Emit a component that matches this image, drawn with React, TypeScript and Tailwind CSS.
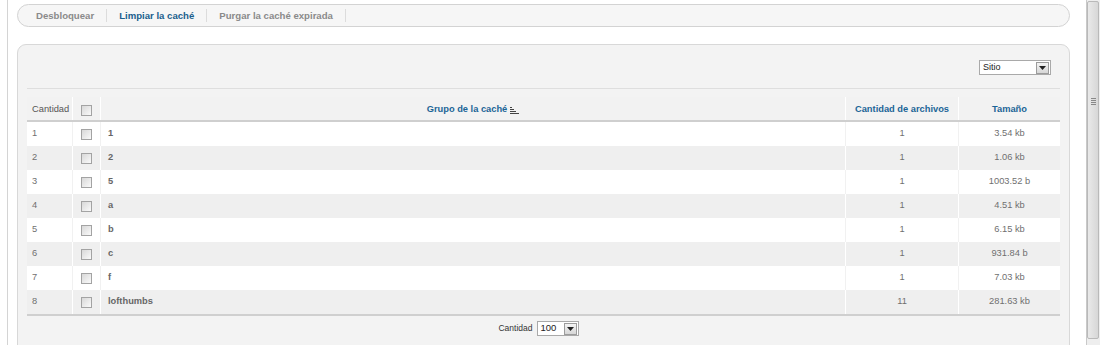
import React from "react";

type CacheRow = { id: number; group: string; files: number; size: string };

const rows: CacheRow[] = [
  { id: 1, group: "1", files: 1, size: "3.54 kb" },
  { id: 2, group: "2", files: 1, size: "1.06 kb" },
  { id: 3, group: "5", files: 1, size: "1003.52 b" },
  { id: 4, group: "a", files: 1, size: "4.51 kb" },
  { id: 5, group: "b", files: 1, size: "6.15 kb" },
  { id: 6, group: "c", files: 1, size: "931.84 b" },
  { id: 7, group: "f", files: 1, size: "7.03 kb" },
  { id: 8, group: "lofthumbs", files: 11, size: "281.63 kb" },
];

const tabs = ["Desbloquear", "Limpiar la caché", "Purgar la caché expirada"];

function Check() {
  return (
    <span className="block h-[11px] w-[11px] border border-[#a3a3a3] bg-gradient-to-br from-[#d8d8d8] to-[#fafafa]" />
  );
}

function DropArrow() {
  return (
    <span className="flex h-[12px] w-[13px] items-center justify-center border border-[#9c9c9c] bg-gradient-to-b from-[#f4f4f4] to-[#d6d6d6]">
      <svg width="7" height="4" viewBox="0 0 7 4">
        <path d="M0 0h7L3.5 4z" fill="#222" />
      </svg>
    </span>
  );
}

function SortIcon() {
  return (
    <svg width="9" height="9" viewBox="0 0 9 9" className="ml-[3px] inline-block">
      <rect x="0" y="1" width="2" height="1" fill="#444" />
      <rect x="0" y="3" width="4" height="1" fill="#444" />
      <rect x="0" y="5" width="6" height="1" fill="#444" />
      <rect x="0" y="7" width="9" height="1" fill="#444" />
    </svg>
  );
}

export default function App() {
  return (
    <div
      className="flex h-[345px] w-[1100px] overflow-hidden bg-white text-[9.3px] text-[#707070]"
      style={{ fontFamily: '"Liberation Sans", Arial, sans-serif' }}
    >
      <div className="flex w-[1086px] pl-[7px]">
        <div className="flex-1 border-l border-[#d4d4d4] pl-[9px] pr-[16px] pt-[4px]">
          <div className="flex h-[23px] w-[1053px] items-center rounded-full border border-[#d3d3d3] bg-[#f6f6f6] pl-[6px] text-[9.6px]">
            {tabs.map((t, i) => (
              <span
                key={t}
                className={
                  "border-r border-[#dcdcdc] px-[12px] leading-[13px] font-bold " +
                  (i === 1 ? "text-[#1b5f8d]" : "text-[#8a8a8a]")
                }
              >
                {t}
              </span>
            ))}
          </div>

          <div className="mt-[17px] h-[320px] w-[1053px] rounded-t-[9px] border border-[#d8d8d8] bg-[#f3f3f3] px-[9px]">
            <div className="flex h-[44px] items-start justify-end border-b border-[#dedede] pr-[9px] pt-[15px]">
              <div className="flex h-[15px] w-[72px] items-center justify-between border border-[#a9a9a9] bg-white pl-[3px] pr-[1px]">
                <span className="text-[9px] text-[#222]">Sitio</span>
                <DropArrow />
              </div>
            </div>

            <div className="mt-[8px]">
              <div className="flex h-[25px] items-stretch border-b-2 border-[#cfcfcf] bg-[#f2f2f2]">
                <div className="flex w-[46px] items-center border-r border-white pt-[3px] pl-[5px] text-[#555]">
                  Cantidad
                </div>
                <div className="flex w-[28px] items-center justify-center border-r border-white pt-[3px]">
                  <Check />
                </div>
                <div className="flex flex-1 items-center justify-center border-r border-white pt-[3px] font-bold text-[#1b6597]">
                  Grupo de la caché
                  <SortIcon />
                </div>
                <div className="flex w-[113px] items-center justify-center border-r border-white pt-[3px] font-bold text-[#1b6597]">
                  Cantidad de archivos
                </div>
                <div className="flex w-[101px] items-center justify-center pt-[3px] font-bold text-[#1b6597]">
                  Tamaño
                </div>
              </div>

              {rows.map((r, i) => {
                const even = i % 2 === 1;
                const sep = even ? "border-white" : "border-[#f1f1f1]";
                return (
                  <div
                    key={r.id}
                    className={
                      "flex items-center " +
                      (even ? "bg-[#efefef]" : "bg-white") +
                      (i === rows.length - 1 ? " h-[26px] border-b-2 border-[#cfcfcf]" : " h-[24px]")
                    }
                  >
                    <div className={"flex h-full w-[46px] items-center border-r pl-[5px] " + sep}>
                      {r.id}
                    </div>
                    <div className={"flex h-full w-[28px] items-center justify-center border-r " + sep}>
                      <Check />
                    </div>
                    <div className={"flex h-full flex-1 items-center border-r pl-[7px] font-bold text-[#666] " + sep}>
                      {r.group}
                    </div>
                    <div className={"flex h-full w-[113px] items-center justify-center border-r " + sep}>
                      {r.files}
                    </div>
                    <div className="flex h-full w-[101px] items-center justify-center">{r.size}</div>
                  </div>
                );
              })}

              <div className="flex items-center justify-center gap-[4px] pt-[5px] pr-[10px]">
                <span className="text-[8.5px] text-[#333]">Cantidad</span>
                <div className="flex h-[15px] w-[42px] items-center justify-between border border-[#a9a9a9] bg-white pl-[3px] pr-[1px]">
                  <span className="text-[9.5px] text-[#222]">100</span>
                  <DropArrow />
                </div>
              </div>
            </div>
          </div>
        </div>
      </div>

      <div className="flex w-[14px] border-l border-[#c9c9c9] bg-[#eeeeee]">
        <div className="mt-[1px] flex h-[338px] w-[12px] items-start justify-center rounded-[2px] border border-[#b9b9b9] bg-gradient-to-r from-[#e9e9e9] to-[#d7d7d7] pt-[96px]">
          <div className="flex flex-col gap-[1px]">
            <span className="block h-[1px] w-[5px] bg-[#888]" />
            <span className="block h-[1px] w-[5px] bg-[#888]" />
            <span className="block h-[1px] w-[5px] bg-[#888]" />
            <span className="block h-[1px] w-[5px] bg-[#888]" />
          </div>
        </div>
      </div>
    </div>
  );
}
